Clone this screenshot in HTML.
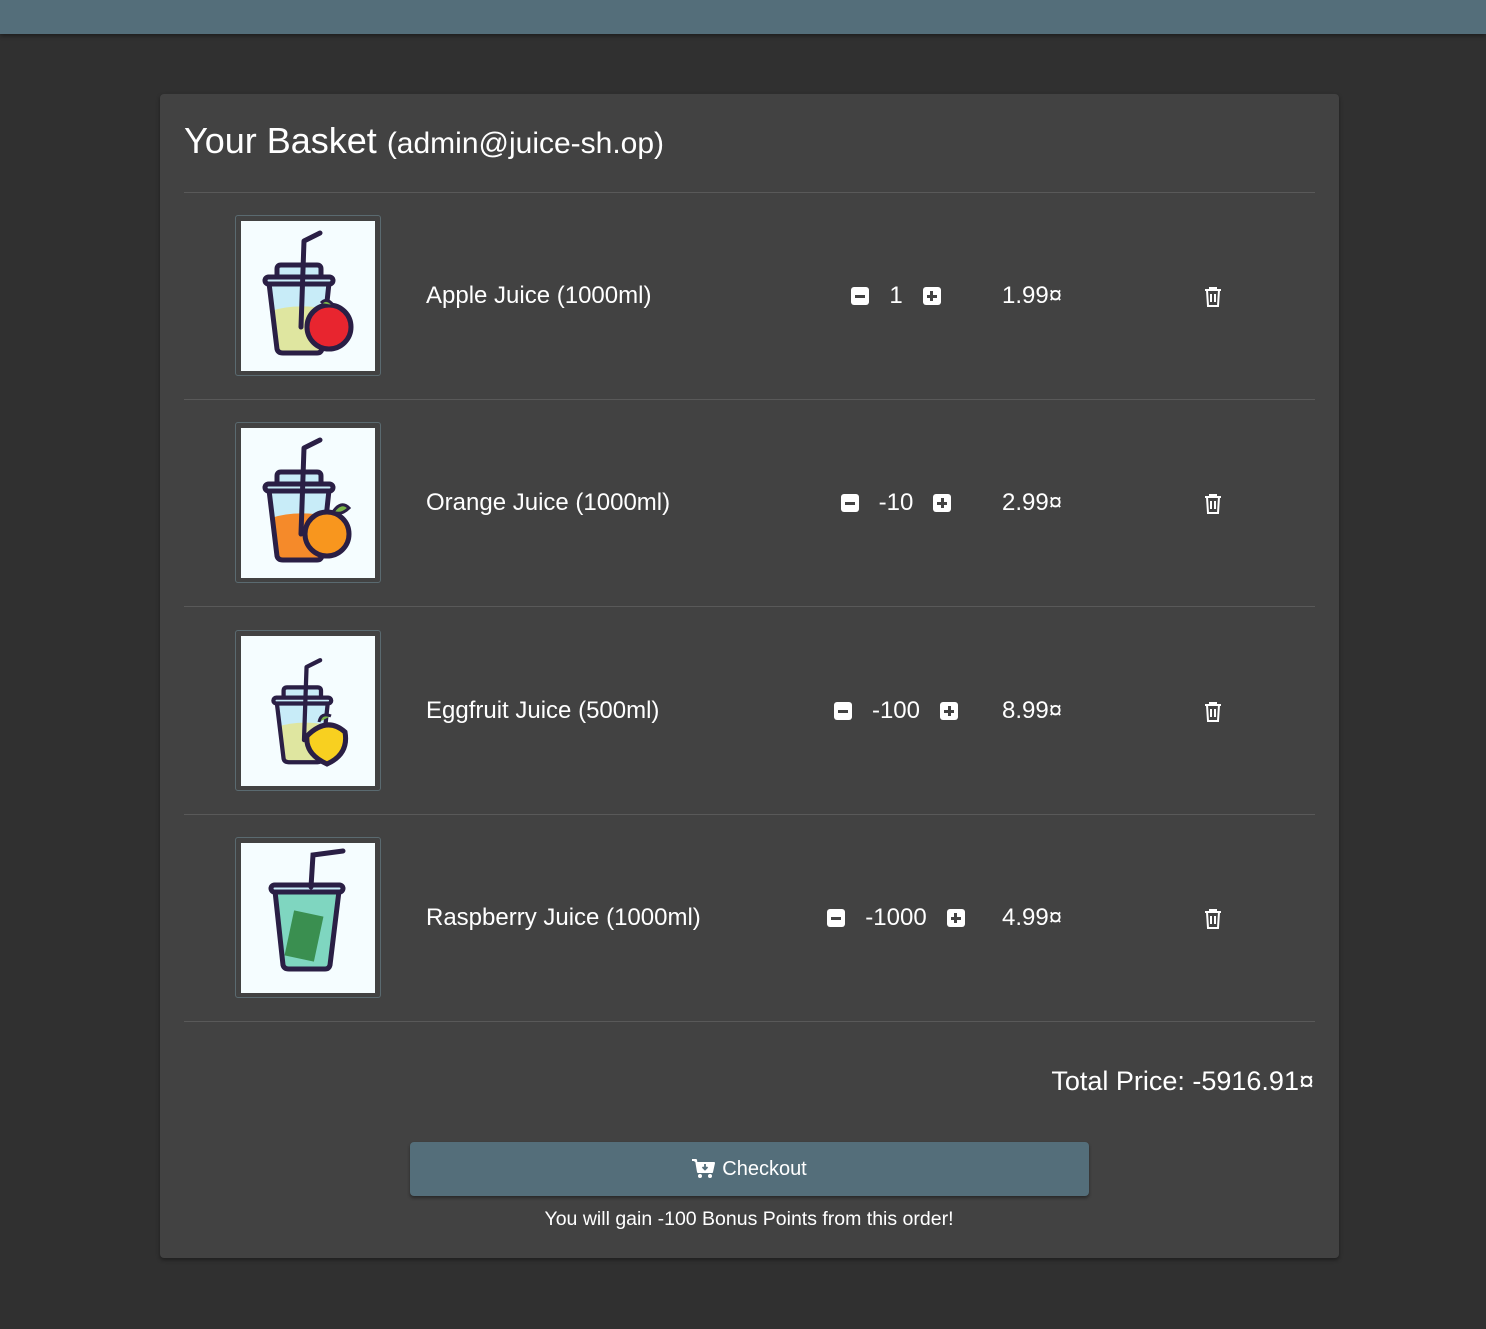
<!DOCTYPE html>
<html><head><meta charset="utf-8"><style>
*{margin:0;padding:0;box-sizing:border-box}
body{width:1486px;height:1329px;background:#303030;font-family:"Liberation Sans",Arial,sans-serif;color:#fff;position:relative;overflow:hidden}
.top{position:absolute;left:0;top:0;width:1486px;height:34px;background:#546e7a;box-shadow:0 2px 4px rgba(0,0,0,.4)}
.card{position:absolute;left:160px;top:94px;width:1179px;height:1164px;background:#424242;border-radius:4px;box-shadow:0 2px 4px rgba(0,0,0,.4)}
h1{position:absolute;left:184px;top:120px;font-weight:400;font-size:36px;white-space:nowrap}
h1 small{font-size:30px}
.sep{position:absolute;left:184px;width:1131px;height:1px;background:#595959}
.img{position:absolute;left:235px;width:146px;height:161px;border:1px solid #5a6a70;border-radius:3px;padding:5px}
.img svg{display:block;width:134px;height:150px;background:#f5fdff}
.name{position:absolute;left:426px;font-size:24px;transform:translateY(-50%);white-space:nowrap}
.qty{position:absolute;left:796px;width:200px;display:flex;justify-content:center;align-items:center;gap:20px;font-size:24px;transform:translateY(-50%)}
.b{width:18px;height:18px;background:#fff;border-radius:3px;position:relative}
.b:before{content:"";position:absolute;left:4px;top:7.5px;width:10px;height:3px;background:#424242}
.b.p:after{content:"";position:absolute;left:7.5px;top:4px;width:3px;height:10px;background:#424242}
.price{position:absolute;left:1002px;font-size:24px;transform:translateY(-50%)}
.trash{position:absolute;left:1203px;transform:translateY(-50%)}
.total{position:absolute;right:172px;top:1066px;font-size:27px}
.btn{position:absolute;left:410px;top:1142px;width:679px;height:54px;background:#546e7a;border-radius:4px;box-shadow:0 2px 3px rgba(0,0,0,.4);display:flex;align-items:center;justify-content:center;font-size:20px;gap:6px}
.bonus{position:absolute;left:6px;width:1486px;top:1208px;text-align:center;font-size:19.5px}
</style></head><body>
<div class="top"></div>
<div class="card"></div>
<h1>Your Basket <small>(admin@juice-sh.op)</small></h1>
<div class="sep" style="top:192px"></div>
<div class="sep" style="top:399px"></div>
<div class="sep" style="top:606px"></div>
<div class="sep" style="top:814px"></div>
<div class="sep" style="top:1021px"></div>

<svg width="0" height="0" style="position:absolute"><defs>
<g id="cup"><path d="M28 62 L36 128 Q37 132 42 132 L76 132 Q80 132 81 128 L88 62Z" fill="#c8ecf8"/><path d="M30 90 Q55 82 87 88 L81 128 Q80 132 76 132 L42 132 Q37 132 36 128Z" fill="var(--j)"/><path d="M28 62 L36 128 Q37 132 42 132 L76 132 Q80 132 81 128 L88 62" fill="none" stroke="#2a1f45" stroke-width="5" stroke-linejoin="round"/><path d="M36 58 L36 48 Q36 44 40 44 L76 44 Q80 44 80 48 L80 58" fill="#c8ecf8" stroke="#2a1f45" stroke-width="5"/><rect x="24" y="56" width="68" height="7" rx="3.5" fill="#c8ecf8" stroke="#2a1f45" stroke-width="5"/><path d="M60 106 L63 20 L79 12" fill="none" stroke="#2a1f45" stroke-width="5" stroke-linecap="round" stroke-linejoin="round"/></g>
</defs></svg>

<div class="img" style="top:215px"><svg viewBox="0 0 134 150" style="--j:#dfe6a0"><use href="#cup"/><circle cx="88" cy="106" r="22" fill="#e8252f" stroke="#2a1f45" stroke-width="5"/><path d="M80 82 Q86 76 92 84" fill="#7ab648" stroke="#2a1f45" stroke-width="3"/></svg></div>
<div class="name" style="top:296px">Apple Juice (1000ml)</div>
<div class="qty" style="top:296px"><span class="b"></span>1<span class="b p"></span></div>
<div class="price" style="top:296px">1.99¤</div>

<div class="img" style="top:422px"><svg viewBox="0 0 134 150" style="--j:#f58a2a"><use href="#cup"/><circle cx="86" cy="106" r="22" fill="#f8961e" stroke="#2a1f45" stroke-width="5"/><path d="M92 84 Q100 72 108 80 Q100 88 92 84Z" fill="#7ab648" stroke="#2a1f45" stroke-width="3"/></svg></div>
<div class="name" style="top:503px">Orange Juice (1000ml)</div>
<div class="qty" style="top:503px"><span class="b"></span>-10<span class="b p"></span></div>
<div class="price" style="top:503px">2.99¤</div>

<div class="img" style="top:630px"><svg viewBox="0 0 134 150" style="--j:#dfe6a0"><g transform="translate(12,14) scale(.85)"><use href="#cup"/></g><path d="M66 100 Q86 80 104 96 Q108 118 86 128 Q64 118 66 100Z" fill="#f8d020" stroke="#2a1f45" stroke-width="5"/><path d="M78 86 Q80 76 90 80" fill="#7ab648" stroke="#2a1f45" stroke-width="3"/></svg></div>
<div class="name" style="top:711px">Eggfruit Juice (500ml)</div>
<div class="qty" style="top:711px"><span class="b"></span>-100<span class="b p"></span></div>
<div class="price" style="top:711px">8.99¤</div>

<div class="img" style="top:837px"><svg viewBox="0 0 134 150" style="--j:#4caf7a"><path d="M34 48 L42 122 Q43 126 48 126 L84 126 Q88 126 89 122 L98 48Z" fill="#7fd6c0" stroke="#2a1f45" stroke-width="5"/><rect x="30" y="42" width="72" height="7" rx="3.5" fill="#c8ecf8" stroke="#2a1f45" stroke-width="5"/><rect x="48" y="70" width="30" height="46" fill="#3a8f50" transform="rotate(12 63 93)"/><path d="M70 44 L72 12 L102 8" fill="none" stroke="#2a1f45" stroke-width="5" stroke-linecap="round"/></svg></div>
<div class="name" style="top:918px">Raspberry Juice (1000ml)</div>
<div class="qty" style="top:918px"><span class="b"></span>-1000<span class="b p"></span></div>
<div class="price" style="top:918px">4.99¤</div>

<svg class="trash" style="top:297px" width="20" height="22" viewBox="0 0 20 22"><path d="M2 4H18M7 4V2H13V4M4 4L5 20H15L16 4M8 8V16M12 8V16" fill="none" stroke="#fff" stroke-width="2"/></svg>
<svg class="trash" style="top:504px" width="20" height="22" viewBox="0 0 20 22"><path d="M2 4H18M7 4V2H13V4M4 4L5 20H15L16 4M8 8V16M12 8V16" fill="none" stroke="#fff" stroke-width="2"/></svg>
<svg class="trash" style="top:712px" width="20" height="22" viewBox="0 0 20 22"><path d="M2 4H18M7 4V2H13V4M4 4L5 20H15L16 4M8 8V16M12 8V16" fill="none" stroke="#fff" stroke-width="2"/></svg>
<svg class="trash" style="top:919px" width="20" height="22" viewBox="0 0 20 22"><path d="M2 4H18M7 4V2H13V4M4 4L5 20H15L16 4M8 8V16M12 8V16" fill="none" stroke="#fff" stroke-width="2"/></svg>

<div class="total">Total Price: -5916.91¤</div>
<div class="btn"><svg width="24" height="20" viewBox="0 0 24 20"><path d="M0 1H4L6 13H20L22 4H5" fill="#fff" stroke="#fff" stroke-width="2" stroke-linejoin="round"/><circle cx="8" cy="17" r="2" fill="#fff"/><circle cx="18" cy="17" r="2" fill="#fff"/><path d="M13 5V10M10.5 8L13 10.5L15.5 8" stroke="#546e7a" stroke-width="1.8" fill="none"/></svg>Checkout</div>
<div class="bonus">You will gain -100 Bonus Points from this order!</div>
</body></html>
